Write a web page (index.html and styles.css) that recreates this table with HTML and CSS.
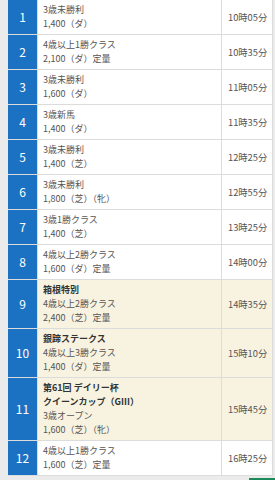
FILE: index.html
```html
<!DOCTYPE html>
<html lang="ja">
<head>
<meta charset="utf-8">
<link rel="stylesheet" href="styles.css">
</head>
<body>
<div class="wrap">
<table class="races">
<tr><td class="num">1</td><td class="info">3歳未勝利<br>1,400（ダ）</td><td class="time">10時05分</td></tr>
<tr><td class="num">2</td><td class="info">4歳以上1勝クラス<br>2,100（ダ）定量</td><td class="time">10時35分</td></tr>
<tr><td class="num">3</td><td class="info">3歳未勝利<br>1,600（ダ）</td><td class="time">11時05分</td></tr>
<tr><td class="num">4</td><td class="info">3歳新馬<br>1,400（ダ）</td><td class="time">11時35分</td></tr>
<tr><td class="num">5</td><td class="info">3歳未勝利<br>1,400（芝）</td><td class="time">12時25分</td></tr>
<tr><td class="num">6</td><td class="info">3歳未勝利<br>1,800（芝）（牝）</td><td class="time">12時55分</td></tr>
<tr><td class="num">7</td><td class="info">3歳1勝クラス<br>1,400（芝）</td><td class="time">13時25分</td></tr>
<tr><td class="num">8</td><td class="info">4歳以上2勝クラス<br>1,600（ダ）定量</td><td class="time">14時00分</td></tr>
<tr class="special"><td class="num">9</td><td class="info"><b>箱根特別</b><br>4歳以上2勝クラス<br>2,400（芝）定量</td><td class="time">14時35分</td></tr>
<tr class="special"><td class="num">10</td><td class="info"><b>銀蹄ステークス</b><br>4歳以上3勝クラス<br>1,400（ダ）定量</td><td class="time">15時10分</td></tr>
<tr class="special"><td class="num">11</td><td class="info"><b>第61回 デイリー杯<br>クイーンカップ（GIII）</b><br>3歳オープン<br>1,600（芝）（牝）</td><td class="time">15時45分</td></tr>
<tr><td class="num">12</td><td class="info">4歳以上1勝クラス<br>1,600（芝）定量</td><td class="time">16時25分</td></tr>
</table>
</div>
<div class="fab"></div>
</body>
</html>
```
FILE: styles.css
```css
html, body {
  margin: 0;
  padding: 0;
  background: #ebebeb;
}
body {
  font-family: "Noto Sans CJK JP", "Noto Sans", sans-serif;
  color: #555;
}
.wrap {
  padding: 0 2px 0 8px;
}
.races {
  width: 100%;
  border-collapse: collapse;
  background: #fff;
  margin-top: -1px;
}
.races td {
  border: 1px solid #dcdcdc;
  font-size: 9px;
  line-height: 14px;
  padding: 3px 5px;
  vertical-align: middle;
}
.races td.num {
  width: 21px;
  background: #1c72c2;
  color: #fff;
  text-align: center;
  font-size: 12px;
  padding: 0 4px;
  border-left: none;
}
.races td.info {
  padding-left: 5px;
}
.races td.time {
  width: 40px;
  padding: 0 4px 0 6px;
  font-size: 9.3px;
  white-space: nowrap;
}
.races tr.special td.info,
.races tr.special td.time {
  background: #f8f3e0;
}
.races b {
  font-weight: 700;
  color: #333;
}
.fab {
  position: fixed;
  right: 0;
  bottom: 0;
  width: 26px;
  height: 2px;
  background: #1d8a5c;
}
```
